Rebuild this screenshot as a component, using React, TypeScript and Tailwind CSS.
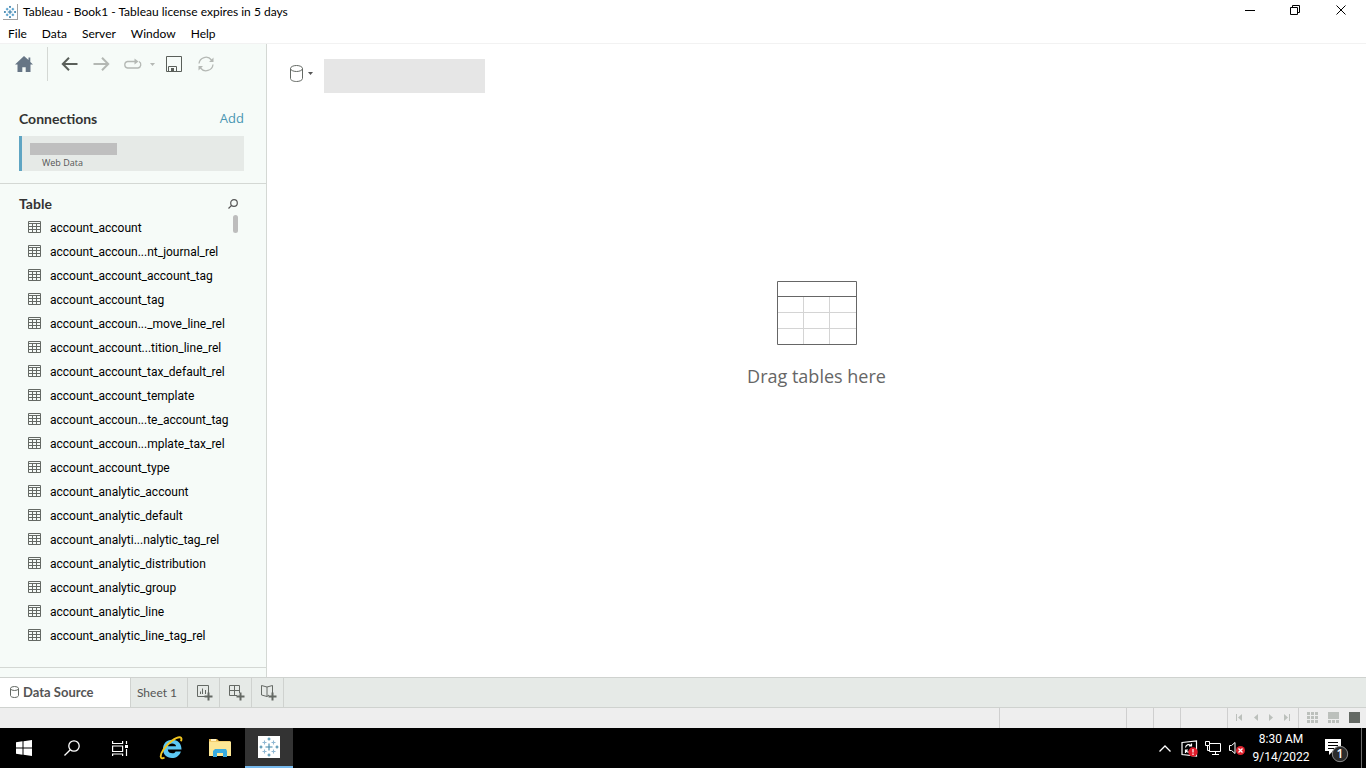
import type { ReactNode } from "react";

const TABLES = [
  "account_account",
  "account_accoun...nt_journal_rel",
  "account_account_account_tag",
  "account_account_tag",
  "account_accoun..._move_line_rel",
  "account_account...tition_line_rel",
  "account_account_tax_default_rel",
  "account_account_template",
  "account_accoun...te_account_tag",
  "account_accoun...mplate_tax_rel",
  "account_account_type",
  "account_analytic_account",
  "account_analytic_default",
  "account_analyti...nalytic_tag_rel",
  "account_analytic_distribution",
  "account_analytic_group",
  "account_analytic_line",
  "account_analytic_line_tag_rel",
];

const MENUS = ["File", "Data", "Server", "Window", "Help"];

type IconButtonProps = {
  label: string;
  className?: string;
  children: ReactNode;
};

function IconButton({ label, className = "", children }: IconButtonProps) {
  return (
    <button
      type="button"
      aria-label={label}
      className={`flex shrink-0 items-center justify-center ${className}`}
    >
      {children}
    </button>
  );
}

function TableauLogo({ size, soft = false }: { size: number; soft?: boolean }) {
  const dark = soft ? "#3f86a8" : "#1f6f9f";
  const light = soft ? "#8fb8d3" : "#3a8fc4";
  return (
    <svg width={size} height={size} viewBox="0 0 22 22" fill="none" strokeWidth={soft ? 1.1 : 1.5}>
      <path d="M11 7.500v7M7.500 11h7" stroke={dark} />
      <path d="M11 1.500v3M9.500 3h3M11 17.500v3M9.500 19h3M1.500 11h3M3 9.500v3M17.500 11h3M19 9.500v3" stroke={dark} />
      <path
        d="M6.500 4.500v4M4.500 6.500h4M15.500 4.500v4M13.500 6.500h4M6.500 13.500v4M4.500 15.500h4M15.500 13.500v4M13.500 15.500h4"
        stroke={light}
      />
    </svg>
  );
}

function TableIcon() {
  return (
    <svg width="13" height="12" viewBox="0 0 13 12" fill="none" stroke="#646964" className="shrink-0">
      <path d="M.5 .5h12v11H.5zM.5 2.5h12M.5 5.5h12M.5 8.5h12M4.5 2.5v9M8.5 2.5v9" />
    </svg>
  );
}

function TitleBar() {
  return (
    <header className="flex h-6 items-center pr-0.5">
      <div className="ml-[3px] flex h-4 w-[15px] items-center justify-center border-r border-b border-[#a0a0a0] bg-white">
        <TableauLogo size={14} />
      </div>
      <h1 className="ml-[5px] flex-1 font-['Lato',sans-serif] text-[12px]">
        Tableau - Book1 - Tableau license expires in 5 days
      </h1>
      <IconButton label="Minimize" className="h-6 w-[46px] pb-1">
        <svg width="11" height="11" stroke="#000">
          <path d="M1 5.500h10" />
        </svg>
      </IconButton>
      <IconButton label="Restore" className="h-6 w-[46px] pb-1">
        <svg width="11" height="11" fill="none" stroke="#000">
          <path d="M.5 2.5h7v7h-7zM2.5 2.5v-2h7v7h-2" />
        </svg>
      </IconButton>
      <IconButton label="Close" className="h-6 w-[46px] pb-1">
        <svg width="11" height="11" stroke="#000">
          <path d="M.5 .5l9 9M9.500 .5l-9 9" />
        </svg>
      </IconButton>
    </header>
  );
}

function Toolbar() {
  return (
    <div className="flex h-10 shrink-0 items-center">
      <IconButton label="Home" className="h-[34px] w-12 border-r border-[#d4d8d4]">
        <svg width="18" height="16" viewBox="0 0 18 16" fill="#667585">
          <path d="M9 0L0 8.500h2.500V16h4.800v-4.800h3.400V16h4.800V8.500H18l-2.700-2.600V1.500h-1.800v2.600z" />
        </svg>
      </IconButton>
      <IconButton label="Back" className="ml-[11px] h-6 w-5">
        <svg width="17" height="14" fill="none" stroke="#5a5f5a" strokeWidth="2">
          <path d="M8 .8L1.800 7l6.200 6.200M2 7h14.500" />
        </svg>
      </IconButton>
      <IconButton label="Forward" className="ml-3 h-6 w-5">
        <svg width="17" height="14" fill="none" stroke="#b4b8b4" strokeWidth="2">
          <path d="M9 .8L15.200 7 9 13.200M15 7H.5" />
        </svg>
      </IconButton>
      <IconButton label="Replay animation" className="ml-[11px] h-6 w-5">
        <svg width="19" height="12" fill="none" stroke="#b4b8b4" strokeWidth="1.3">
          <path d="M16 3.500a3.500 3.500 0 0 1-1 6.500H4.500a3.300 3.300 0 0 1 0-6.500H13" />
          <path d="M11.500 .5l4 3-4 3z" fill="#b4b8b4" stroke="none" />
        </svg>
      </IconButton>
      <IconButton label="Replay options" className="ml-0.5 h-6 w-4">
        <svg width="5" height="3" fill="#b4b8b4">
          <path d="M0 0h5L2.500 3z" />
        </svg>
      </IconButton>
      <IconButton label="Save" className="ml-1 h-6 w-5">
        <svg width="16" height="16" fill="none" stroke="#5a5f5a">
          <path d="M.5 .5h15v15H.5zM2.500 15V10.500h8V15" />
          <path d="M5 12h3v3H5z" fill="#5a5f5a" stroke="none" />
        </svg>
      </IconButton>
      <IconButton label="Refresh" className="ml-3 h-6 w-5">
        <svg width="18" height="16" fill="none" stroke="#b4b8b4" strokeWidth="1.3">
          <path d="M2 7.500A7 7 0 0 1 14.500 4M16 8.500A7 7 0 0 1 3.500 12" />
          <path d="M16.500 1.500v4.500H12zM1.500 14.500V10H6z" fill="#b4b8b4" stroke="none" />
        </svg>
      </IconButton>
    </div>
  );
}

function Sidebar() {
  return (
    <aside className="flex w-[267px] shrink-0 flex-col border-r border-[#d4d8d4] bg-[#f6fbf8]">
      <Toolbar />
      <section className="mt-6 border-b border-[#d4d8d4] pr-[22px] pb-3 pl-[19px]">
        <div className="flex h-[22px] items-center justify-between">
          <h2 className="pb-0.5 font-['Lato',sans-serif] text-[14px] font-bold text-[#333]">
            Connections
          </h2>
          <a href="#add" className="text-[13px] text-[#4996b2]">
            Add
          </a>
        </div>
        <div className="mt-1.5 h-[35px] border-l-[3px] border-[#5fa5c3] bg-[#e6eae7] pt-[7px] pl-2">
          <div className="h-3 w-[87px] bg-[#bfbfbf]" />
          <p className="pl-3 text-[9px] leading-4 text-[#555]">Web Data</p>
        </div>
      </section>
      <section className="flex min-h-0 flex-1 flex-col border-b border-[#d4d8d4]">
        <div className="mt-[9px] flex h-[22px] shrink-0 items-center justify-between pr-7 pl-[19px]">
          <h2 className="pb-0.5 font-['Lato',sans-serif] text-[14px] font-bold text-[#333]">
            Table
          </h2>
          <IconButton label="Search tables">
            <svg width="10" height="10" fill="none" stroke="#555" strokeWidth="1.2">
              <circle cx="6" cy="4" r="3.300" />
              <path d="M3.600 6.400L.5 9.500" />
            </svg>
          </IconButton>
        </div>
        <div className="relative min-h-0 flex-1 overflow-hidden">
          <ul className="pt-px">
            {TABLES.map((name) => (
              <li
                key={name}
                className="flex h-6 items-start pt-[5px] pl-7 font-['Roboto',sans-serif] text-[12px] leading-[14px] whitespace-nowrap"
              >
                <TableIcon />
                <span className="ml-[9px]">{name}</span>
              </li>
            ))}
          </ul>
          <div className="absolute top-0 right-7 h-[18px] w-[5px] rounded-sm bg-[#bdbdbd]" />
        </div>
      </section>
      <div className="h-[9px] shrink-0" />
    </aside>
  );
}

function Canvas() {
  return (
    <main className="flex flex-1 flex-col bg-white">
      <div className="flex items-start pt-[15px] pl-[22px]">
        <IconButton label="Data source" className="mt-0.5 h-6 w-6 gap-[5px]">
          <svg width="13" height="17" fill="none" stroke="#646964" className="shrink-0">
            <ellipse cx="6.500" cy="3.500" rx="6" ry="3" />
            <path d="M.5 3.500v10c0 1.700 2.700 3 6 3s6-1.300 6-3v-10" />
          </svg>
          <svg width="5" height="3" fill="#555" className="shrink-0">
            <path d="M0 0h5L2.500 3z" />
          </svg>
        </IconButton>
        <div className="ml-[11px] h-[34px] w-[161px] bg-[#e6e6e6]" />
      </div>
      <div className="mt-[188px] flex flex-col items-center">
        <svg width="80" height="64" fill="none">
          <path d="M1 31.500h78M1 47.500h78M26.500 16v47M52.500 16v47" stroke="#d4d4d4" />
          <path d="M.5 .5h79v63H.5zM.5 15.500h79" stroke="#666" />
        </svg>
        <p className="mt-[19px] text-[18px] leading-6 text-[#666]">Drag tables here</p>
      </div>
    </main>
  );
}

function SheetTabs() {
  return (
    <nav className="flex h-[31px] shrink-0 border-y border-[#cfd2cf] bg-[#e6eae7] text-[12px] text-[#555]">
      <button
        type="button"
        className="flex w-[131px] items-center border-r border-[#cfd2cf] bg-white pl-[10px] font-bold"
      >
        <svg width="9" height="12" fill="none" stroke="#646964" className="mb-0.5">
          <ellipse cx="4.500" cy="2.500" rx="4" ry="2" />
          <path d="M.5 2.500v7c0 1.100 1.800 2 4 2s4-.9 4-2v-7" />
        </svg>
        <span className="ml-1 font-['Lato',sans-serif] text-[13px]">Data Source</span>
      </button>
      <button
        type="button"
        className="w-[57px] border-r border-[#cfd2cf] pr-1 font-['Lato',sans-serif]"
      >
        Sheet 1
      </button>
      <IconButton label="New worksheet" className="w-8 border-r border-[#cfd2cf] pl-0.5">
        <svg width="16" height="16" fill="none" stroke="#646964">
          <path d="M8 11.500H.5V.5h11V8M3.500 9V6.500M5.500 9V3.500M8.500 9V5" />
          <path d="M11.500 7.500v8M7.500 11.500h8" strokeWidth="2" />
        </svg>
      </IconButton>
      <IconButton label="New dashboard" className="w-8 border-r border-[#cfd2cf] pl-0.5">
        <svg width="16" height="16" fill="none" stroke="#646964">
          <path d="M8 10.500H.5V.5h10V8M.5 5.500h10M5.500 .5v10" />
          <path d="M11.500 7.500v8M7.500 11.500h8" strokeWidth="2" />
        </svg>
      </IconButton>
      <IconButton label="New story" className="w-8 border-r border-[#cfd2cf] pl-0.5">
        <svg width="16" height="16" fill="none" stroke="#646964">
          <path d="M8 10l-2 1.500-5.500-1.500V.5L6 2l5.500-1.500V8M6 2v9.500" />
          <path d="M11.500 7.500v8M7.500 11.500h8" strokeWidth="2" />
        </svg>
      </IconButton>
    </nav>
  );
}

function StatusBar() {
  return (
    <div className="flex h-5 shrink-0 justify-end bg-[#eee]">
      <div className="w-[127px] border-l border-[#cfcfcf]" />
      <div className="w-[27px] border-l border-[#cfcfcf]" />
      <div className="w-[27px] border-l border-[#cfcfcf]" />
      <div className="w-[47px] border-l border-[#cfcfcf]" />
      <div className="flex w-[71px] items-center justify-between border-l border-[#cfcfcf] pr-[7px] pb-0.5 pl-2">
        <IconButton label="First sheet">
          <svg width="7" height="7" fill="#bcc0bc">
            <path d="M0 0h1v7H0zM6 0v7L2 3.500z" />
          </svg>
        </IconButton>
        <IconButton label="Previous sheet">
          <svg width="4" height="7" fill="#bcc0bc">
            <path d="M4 0v7L0 3.500z" />
          </svg>
        </IconButton>
        <IconButton label="Next sheet">
          <svg width="4" height="7" fill="#bcc0bc">
            <path d="M0 0v7l4-3.500z" />
          </svg>
        </IconButton>
        <IconButton label="Last sheet">
          <svg width="7" height="7" fill="#bcc0bc">
            <path d="M5 0h1v7H5zM0 0v7l4-3.500z" />
          </svg>
        </IconButton>
      </div>
      <div className="flex w-[68px] items-center justify-between border-l border-[#cfcfcf] pr-[6px] pb-0.5 pl-2">
        <IconButton label="Show sheet sorter">
          <svg width="11" height="11" fill="#bcc0bc">
            <path d="M0 0h3v3H0zM4 0h3v3H4zM8 0h3v3H8zM0 4h3v3H0zM4 4h3v3H4zM8 4h3v3H8zM0 8h3v3H0zM4 8h3v3H4zM8 8h3v3H8z" />
          </svg>
        </IconButton>
        <IconButton label="Show filmstrip">
          <svg width="11" height="11" fill="#bcc0bc">
            <path d="M0 0h11v7H0zM0 8h3v3H0zM4 8h3v3H4zM8 8h3v3H8z" />
          </svg>
        </IconButton>
        <IconButton label="Show tabs">
          <svg width="11" height="11" fill="#646964">
            <path d="M0 0h11v11H0z" />
          </svg>
        </IconButton>
      </div>
    </div>
  );
}

function Taskbar() {
  return (
    <footer className="flex h-10 shrink-0 bg-black text-white">
      <IconButton label="Start" className="w-12">
        <svg width="16" height="16" fill="#fff">
          <path d="M0 2.300L6.500 1.300v6.200H0zM7.500 1.200L16 0v7.500H7.500zM0 8.500h6.500v6.200L0 13.700zM7.500 8.500H16V16l-8.500-1.200z" />
        </svg>
      </IconButton>
      <IconButton label="Search" className="w-12">
        <svg width="16" height="16" fill="none" stroke="#fff" strokeWidth="1.3">
          <circle cx="10" cy="6" r="5.200" />
          <path d="M6.300 9.700L.5 15.500" />
        </svg>
      </IconButton>
      <IconButton label="Task view" className="w-12">
        <svg width="17" height="15" fill="none" stroke="#fff" strokeWidth="1.200">
          <path d="M.6 0v2.500h10V0M.6 5h10v5.500H.6zM.6 15v-2h10v2M14.500 0v3M14.500 8v7" />
          <path d="M13 4h3v3h-3z" fill="#fff" stroke="none" />
        </svg>
      </IconButton>
      <IconButton label="Internet Explorer" className="ml-[3px] w-12">
        <svg width="24" height="24" viewBox="0 0 24 24">
          <path
            d="M22.500 13.500H8.800c.2 4.400 6.700 5 7.800 2h5.300C20.300 20.200 17 22 13 22c-5.500 0-9-3.700-9-9s3.700-9.200 9.200-9.200c5.800 0 9.300 3.900 9.300 9.700zM8.900 10.300h8.200c-.4-3.600-7.300-3.900-8.200 0z"
            fill="#5cc9f5"
            fillRule="evenodd"
          />
          <path
            d="M5.500 21.500C1.200 24 .2 20 4.500 13.500 9 7 17 .8 21 1.200c1.800.2 1.700 2 1 4"
            fill="none"
            stroke="#f2c61f"
            strokeWidth="1.900"
          />
        </svg>
      </IconButton>
      <IconButton label="File Explorer" className="w-[50px]">
        <svg width="22" height="20" viewBox="0 0 22 20">
          <path d="M0 1h8l2 2h11v15H0z" fill="#e8b64c" />
          <path d="M2 1h5v2H2z" fill="#fff3c4" />
          <path d="M0 3.500h22V18H0z" fill="#fde795" />
          <path d="M4 19v-6l2-2h11l1 2v6h-4v-4H8v4z" fill="#39ace0" />
        </svg>
      </IconButton>
      <IconButton label="Tableau" className="w-12 border-b-2 border-[#76b9ed] bg-[#333]">
        <span className="flex h-[22px] w-[22px] items-center justify-center bg-white">
          <TableauLogo size={22} soft />
        </span>
      </IconButton>
      <div className="ml-auto flex items-center">
        <IconButton label="Show hidden icons" className="h-10 w-6">
          <svg width="12" height="7" fill="none" stroke="#fff" strokeWidth="1.300">
            <path d="M.5 6.500L6 1l5.500 5.500" />
          </svg>
        </IconButton>
        <IconButton label="Updates" className="h-10 w-6">
          <svg width="17" height="17" fill="none" stroke="#fff">
            <path d="M1 2.500L15.500 .8v15.400L1 14.500z" strokeWidth="1.200" />
            <path d="M4.500 7.500c.5-3 4-4 6-1.500M10.500 3.500V6H8M4.500 13v-3H7M5 10.500c1 2 3 2.500 5 0" strokeWidth="1.200" />
            <circle cx="12" cy="12" r="4.700" fill="#e11d2b" stroke="none" />
            <path d="M12 9v3.500M12 13.500V15" strokeWidth="1.200" />
          </svg>
        </IconButton>
        <IconButton label="Network" className="h-10 w-6">
          <svg width="17" height="15" fill="none" stroke="#fff">
            <path d="M5 2.500h10.500v8H4.500V5M10.500 10.500v3M7 13.500h7M.5 .5h4v4h-4zM2.500 4.500v5H5" />
          </svg>
        </IconButton>
        <IconButton label="Volume muted" className="h-10 w-6">
          <svg width="17" height="15" fill="none" stroke="#fff">
            <path d="M.5 4.500h2l3.500-3v11l-3.500-3h-2z" />
            <circle cx="11.500" cy="9.500" r="4.500" fill="#e0242f" stroke="none" />
            <path d="M9.500 7.500l4 4M13.500 7.500l-4 4" strokeWidth="1.300" />
          </svg>
        </IconButton>
        <button
          type="button"
          className="w-16 text-center font-['Roboto',sans-serif] text-[12px] leading-[18px]"
        >
          <span className="block">8:30 AM</span>
          <span className="block">9/14/2022</span>
        </button>
        <IconButton label="Notifications" className="h-10 w-12 pt-1">
          <svg width="26" height="26" fill="none">
            <path d="M1 2h16v12H9l-4 4v-4H1z" fill="#fff" />
            <path d="M4 5.500h10M4 8.500h10M4 11.500h6" stroke="#000" />
            <circle cx="16" cy="17" r="7.700" fill="#2b2b2b" stroke="#8a8a8a" />
            <text x="16" y="21" textAnchor="middle" fontSize="12" fontWeight="600" fill="#fff">
              1
            </text>
          </svg>
        </IconButton>
        <div className="h-10 w-[5px] border-l border-[#6b6b6b]" />
      </div>
    </footer>
  );
}

export default function App() {
  return (
    <div className="flex h-screen flex-col overflow-hidden bg-white font-['Open_Sans','Noto_Sans',sans-serif] text-black">
      <TitleBar />
      <div className="flex h-5 items-center gap-[15px] border-b border-[#f2f2f2] pl-2 font-['Lato',sans-serif] text-[12px]">
        {MENUS.map((menu) => (
          <button key={menu} type="button">
            {menu}
          </button>
        ))}
      </div>
      <div className="flex min-h-0 flex-1">
        <Sidebar />
        <Canvas />
      </div>
      <SheetTabs />
      <StatusBar />
      <Taskbar />
    </div>
  );
}
